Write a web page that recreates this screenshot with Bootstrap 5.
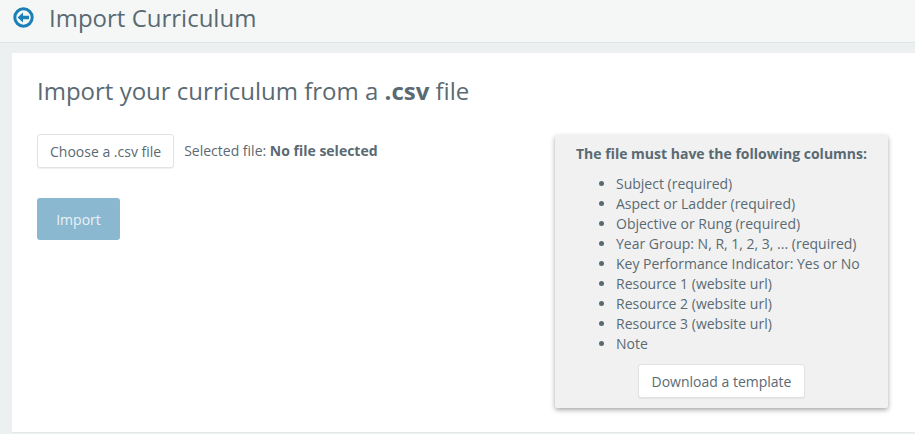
<!DOCTYPE html>
<html lang="en"><head><meta charset="utf-8"><title>Import Curriculum</title>
<link href="https://cdn.jsdelivr.net/npm/bootstrap@5.3.0/dist/css/bootstrap.min.css" rel="stylesheet">
<style>
html,body{height:434px;overflow:hidden}
body{background:#ecf0f1;font-family:"Open Sans",sans-serif;color:#5a6a73;font-size:14px;line-height:20px}
.topbar{height:43px;background:#f5f7f7;border-bottom:1px solid #dfe4e5;padding:0 0 7px 13px;gap:15px}
.topbar h1{font-size:24px;line-height:36px;font-weight:400;margin:0;color:#5a6a73}
.sheet{background:#fff;margin:10px 0 0 12px;height:380px;padding:20px 27px 0 25px;border-bottom:1px solid #e4e8e9}
.sheet h2{font-size:24px;line-height:36px;font-weight:400;margin:0;color:#5a6a73}
.leftcol{padding-top:25px}
.chooser{gap:10px}
.pick{background:#fff;border:1px solid #dfe3e4;border-radius:3px;color:#5a6a73;font-size:14px;height:34px;padding:0 12px;box-shadow:0 1px 1px rgba(0,0,0,.06)}
.pick:hover{background:#fff}
.go{width:83px;height:42px;margin-top:30px;background:#8ab8d0;border:0;border-radius:3px;color:#e9f2f6;font-size:14px;padding:0;opacity:1}
.infobox{width:333px;height:273px;margin-top:26px;background:#f1f1f1;border-radius:2px;box-shadow:0 2px 5px rgba(0,0,0,.35);padding:9px 0 0 0;flex:none}
.infobox p{font-weight:700;text-align:center;margin:0 0 10px}
.infobox ul{margin:0 0 10px;padding-left:61px}
.infobox .pick{display:block;margin:0 auto;padding:0 13px}
</style></head><body>
<header class="topbar d-flex align-items-center">
<svg width="21" height="21" viewBox="0 0 21 21" aria-hidden="true"><circle cx="10.5" cy="10.5" r="8.7" fill="none" stroke="#1a80b6" stroke-width="3"/><path d="M4.6 10.5 10 5.5v3.2h6v3.6h-6v3.2z" fill="#1a80b6"/></svg>
<h1>Import Curriculum</h1>
</header>
<main class="sheet">
<h2>Import your curriculum from a <b>.csv</b> file</h2>
<div class="d-flex justify-content-between">
<div class="leftcol">
<div class="d-flex align-items-center chooser"><button class="btn pick" type="button">Choose a .csv file</button><span>Selected file: <b>No file selected</b></span></div>
<button class="btn go d-block" type="button">Import</button>
</div>
<aside class="infobox">
<p>The file must have the following columns:</p>
<ul>
<li>Subject (required)</li><li>Aspect or Ladder (required)</li><li>Objective or Rung (required)</li><li>Year Group: N, R, 1, 2, 3, ... (required)</li><li>Key Performance Indicator: Yes or No</li><li>Resource 1 (website url)</li><li>Resource 2 (website url)</li><li>Resource 3 (website url)</li><li>Note</li>
</ul>
<button class="btn pick" type="button">Download a template</button>
</aside>
</div>
</main>
</body></html>
